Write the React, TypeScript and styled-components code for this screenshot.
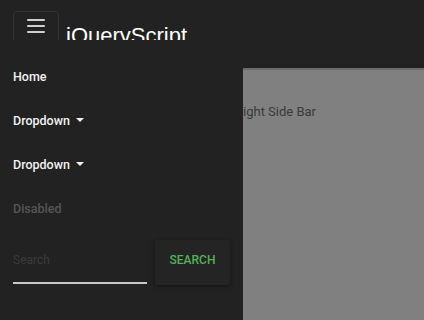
import React from "react";
import styled, { createGlobalStyle } from "styled-components";

const GlobalStyle = createGlobalStyle`
  * { box-sizing: border-box; }
  body {
    margin: 0;
    background: #222222;
    font-family: Roboto, "Liberation Sans", sans-serif;
  }
`;

const Page = styled.div`
  position: relative;
  width: 424px;
  height: 320px;
  overflow: hidden;
  background: #222222;
`;

const Header = styled.header`
  height: 40px;
  overflow: hidden;
  display: flex;
  align-items: flex-start;
  gap: 7px;
  padding: 11px 13px 0;
`;

const Toggle = styled.button`
  width: 46px;
  height: 38px;
  flex-shrink: 0;
  border: 1px solid #333333;
  border-radius: 4px;
  background: transparent;
  display: flex;
  flex-direction: column;
  align-items: center;
  justify-content: flex-start;
  gap: 4px;
  padding: 7px 0 0;
`;

const Bar = styled.span`
  display: block;
  width: 18px;
  height: 2px;
  background: #cfcfcf;
  border-radius: 1px;
`;

const Brand = styled.div`
  font-family: "Liberation Sans", Arial, sans-serif;
  font-size: 22px;
  line-height: 22px;
  color: #ffffff;
  padding-top: 14px;
`;

const Content = styled.main`
  padding: 28px 0 0 212px;
  height: 280px;
`;

const GrayPanel = styled.section`
  height: 100%;
  background: #808080;
  border-top: 2px solid #6c6c6c;
  padding: 34px 16px 0 23px;
  font-size: 13px;
  color: #3a3a3a;
`;

const Sidebar = styled.nav`
  position: absolute;
  top: 40px;
  left: 0;
  bottom: 0;
  width: 243px;
  background: #222222;
  padding: 14px 13px 0;
`;

const NavItem = styled.div<{ disabled?: boolean }>`
  height: 44px;
  display: flex;
  align-items: center;
  font-size: 12.5px;
  font-weight: 500;
  color: ${(p) => (p.disabled ? "#555555" : "#f2f2f2")};
`;

const Caret = styled.span`
  width: 0;
  height: 0;
  margin-left: 6px;
  border-top: 4px solid #f2f2f2;
  border-left: 4px solid transparent;
  border-right: 4px solid transparent;
`;

const SearchForm = styled.form`
  display: flex;
  align-items: flex-start;
  gap: 8px;
  margin-top: 10px;
`;

const SearchInput = styled.input`
  width: 134px;
  height: 44px;
  border: none;
  border-bottom: 2px solid #c8c8c8;
  background: transparent;
  padding: 0 0 2px;
  font-family: Roboto, sans-serif;
  font-size: 12px;
  color: #ffffff;
  outline: none;

  &::placeholder {
    color: #3a3a3a;
  }
`;

const SearchButton = styled.button`
  width: 77px;
  height: 45px;
  border: none;
  border-radius: 2px;
  background: #242424;
  box-shadow: 0 1px 4px rgba(0, 0, 0, 0.45);
  padding: 0 0 6px;
  font-family: Roboto, sans-serif;
  font-size: 12px;
  font-weight: 500;
  text-transform: uppercase;
  color: #55b058;
`;

export default function App() {
  return (
    <Page>
      <GlobalStyle />
      <Header>
        <Toggle aria-label="Toggle navigation">
          <Bar />
          <Bar />
          <Bar />
        </Toggle>
        <Brand>jQueryScript</Brand>
      </Header>
      <Content>
        <GrayPanel>Right Side Bar</GrayPanel>
      </Content>
      <Sidebar>
        <NavItem>Home</NavItem>
        <NavItem>
          Dropdown
          <Caret />
        </NavItem>
        <NavItem>
          Dropdown
          <Caret />
        </NavItem>
        <NavItem disabled>Disabled</NavItem>
        <SearchForm onSubmit={(e) => e.preventDefault()}>
          <SearchInput placeholder="Search" />
          <SearchButton type="submit">Search</SearchButton>
        </SearchForm>
      </Sidebar>
    </Page>
  );
}
